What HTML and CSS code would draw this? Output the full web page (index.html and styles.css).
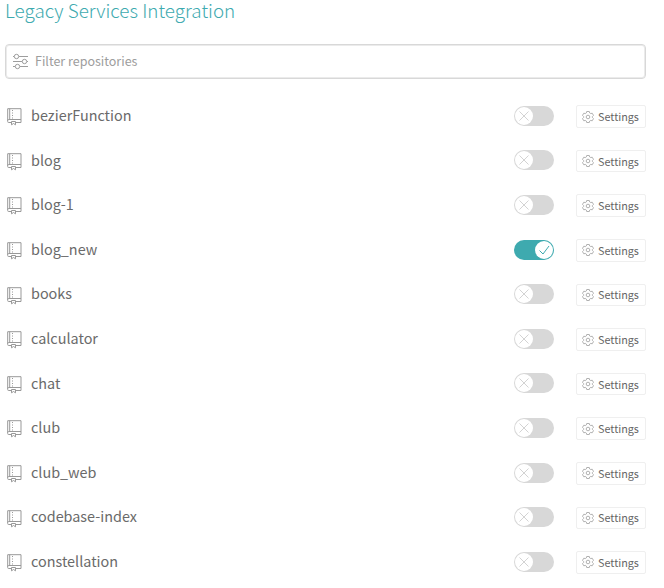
FILE: index.html
```
<!DOCTYPE html>
<html lang="en">
<head>
<meta charset="utf-8">
<title>Legacy Services Integration</title>
<link rel="stylesheet" href="styles.css">
</head>
<body>
<svg class="sprite" aria-hidden="true">
  <symbol id="repo" viewBox="0 0 15 18"><path d="M.7 .7H14V14.5H9M4 14.500H1.500Q.7 14.500.7 13.500V.7M.7 12.500Q.7 11.500 1.500 11.500H14M2.700 .7V11.500M4.500 13.500V16.800L6.500 15.500L8.500 16.800V13.500Z"/><path d="M5.500 2V10.500" stroke-dasharray="1 1.500"/></symbol>
  <symbol id="gear" viewBox="0 0 12 12"><path d="M4.700 .500H7.300L7.700 2L8.700 2.600L10.200 2.200L11.500 4.400L10.400 5.500V6.500L11.500 7.600L10.200 9.800L8.700 9.400L7.700 10L7.300 11.500H4.700L4.300 10L3.300 9.400L1.800 9.800L.500 7.600L1.600 6.500V5.500L.500 4.400L1.800 2.200L3.300 2.600L4.300 2Z"/><circle cx="6" cy="6" r="1.800"/></symbol>
</svg>
<main class="page">
  <h1 class="title">Legacy Services Integration</h1>
  <label class="filter">
    <svg class="filter-icon" viewBox="0 0 16 17"><path d="M0 3.500H1M6 3.500H15M0 8.500H9M14 8.500H15M0 13.500H2M7 13.500H15"/><circle cx="3.500" cy="3.500" r="2.200"/><circle cx="11.500" cy="8.500" r="2.200"/><circle cx="4.500" cy="13.500" r="2.200"/></svg>
    <input class="filter-input" type="text" placeholder="Filter repositories">
  </label>
  <ul class="repos" id="repos"></ul>
</main>
<script src="script.js"></script>
</body>
</html>
```
FILE: styles.css
```
* { box-sizing: border-box; }
body {
  margin: 0;
  background: #fff;
  color: #6a6a6a;
  font-family: "Noto Sans CJK SC", "Noto Sans", sans-serif;
}
.sprite { display: none; }
svg { fill: none; flex: none; }
.page { width: 646px; padding-left: 5px; }
.title {
  margin: 0;
  height: 44px;
  line-height: 20px;
  font-size: 18.85px;
  font-weight: 300;
  color: #3eaaaf;
  white-space: nowrap;
}
.filter {
  display: flex;
  align-items: center;
  height: 35px;
  padding-left: 7px;
  border: 1px solid #d8d8d8;
  border-radius: 4px;
  box-shadow: inset 0 0 0 1px #ebebeb;
}
.filter-icon { width: 16px; height: 17px; margin-top: -1px; stroke: #9d9d9d; }
.filter-input {
  flex: 1;
  margin-top: -2px;
  padding: 0 0 0 6px;
  border: 0;
  outline: 0;
  background: none;
  font: 12.5px/20px "Noto Sans CJK SC", "Noto Sans", sans-serif;
}
.filter-input::placeholder { color: #9d9d9d; }
.repos { margin: 14.5px 0 0; padding: 0; list-style: none; }
.repo { display: flex; align-items: center; height: 44.6px; }
.repo-icon { width: 15px; height: 18px; margin: 3px 9px 0 2px; stroke: #999; stroke-width: 1; }
.repo-name { flex: 1; margin-top: -1.5px; font-size: 14.4px; line-height: 22px; }
.toggle {
  display: flex;
  align-items: center;
  width: 40px;
  height: 20px;
  margin-right: 22px;
  padding: 0 1px;
  border-radius: 10px;
  background: #d8d8d8;
}
.toggle.on { justify-content: flex-end; background: #3eaaaf; }
.knob { width: 18px; height: 18px; border-radius: 50%; background: #fff; stroke: #d3d3d3; }
.on .knob { stroke: #3eaaaf; }
.settings {
  display: flex;
  align-items: center;
  width: 70px;
  height: 22.5px;
  margin-top: 1.5px;
  padding: 0 0 1px 5px;
  border: 1px solid #efefef;
  border-radius: 2px;
  background: #fff;
  color: #666;
  font: 10.8px/20px "Noto Sans CJK SC", "Noto Sans", sans-serif;
}
.gear { width: 12px; height: 12px; margin: 1px 4px 0 0; stroke: #a8a8a8; stroke-width: .9; }
```
FILE: script.js
```
const repos = ["bezierFunction", "blog", "blog-1", "blog_new", "books", "calculator", "chat", "club", "club_web", "codebase-index", "constellation"];
const active = "blog_new";
document.getElementById("repos").innerHTML = repos.map(name => {
  const on = name === active;
  const mark = on ? "M4.500 9.500L8 13L14 5" : "M4.500 4.500L13.500 13.500M13.500 4.500L4.500 13.500";
  return `<li class="repo">
    <svg class="repo-icon"><use href="#repo"/></svg>
    <span class="repo-name">${name}</span>
    <span class="toggle${on ? " on" : ""}"><svg class="knob" viewBox="0 0 18 18"><path d="${mark}"/></svg></span>
    <button class="settings"><svg class="gear"><use href="#gear"/></svg>Settings</button>
  </li>`;
}).join("");
```
